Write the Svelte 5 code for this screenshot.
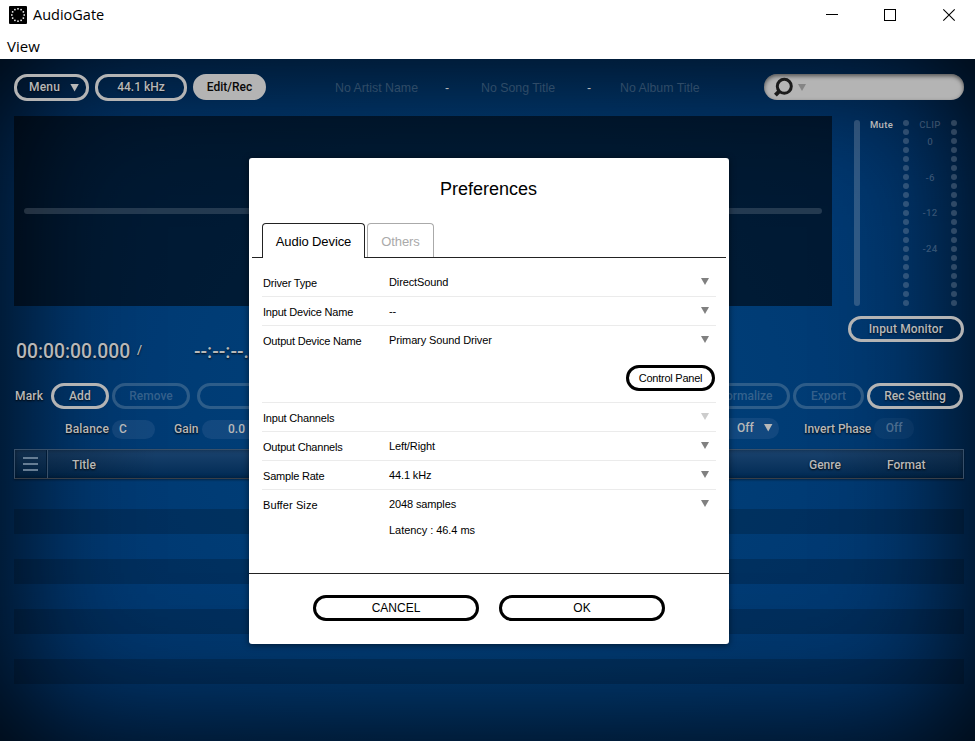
<script lang="ts">
	type Setting = {
		label: string;
		value: string;
		disabled?: boolean;
		panel?: boolean;
		note?: string;
	};

	const settings: Setting[] = [
		{ label: 'Driver Type', value: 'DirectSound' },
		{ label: 'Input Device Name', value: '--' },
		{ label: 'Output Device Name', value: 'Primary Sound Driver', panel: true },
		{ label: 'Input Channels', value: '', disabled: true },
		{ label: 'Output Channels', value: 'Left/Right' },
		{ label: 'Sample Rate', value: '44.1 kHz' },
		{ label: 'Buffer Size', value: '2048 samples', note: 'Latency : 46.4 ms' }
	];

	const dots = Array.from({ length: 21 });
	const rows = Array.from({ length: 9 });
	const ring = Array.from({ length: 12 }, (_, i) => {
		const a = (i * Math.PI) / 6;
		return { x: 9 + 6.2 * Math.cos(a), y: 9 + 6.2 * Math.sin(a) };
	});

	let tab = $state('Audio Device');
</script>

<div class="window">
	<header class="titlebar">
		<svg class="logo" width="18" height="18" viewBox="0 0 18 18">
			<rect width="18" height="18" rx="1" fill="#000" />
			{#each ring as p}
				<rect x={p.x - 0.75} y={p.y - 0.75} width="1.5" height="1.5" fill="#fff" />
			{/each}
		</svg>
		<span class="app-name">AudioGate</span>
		<svg class="controls" width="130" height="14" viewBox="0 0 130 14" fill="none" stroke="#000">
			<path d="M0 6.5h12" />
			<rect x="58.5" y="1.5" width="11" height="11" />
			<path d="M117.3 1.3l11.4 11.4M128.7 1.3l-11.4 11.4" stroke-width="1.1" />
		</svg>
	</header>
	<nav class="menubar">View</nav>

	<main class="stage">
		<div class="toolbar">
			<button class="pill menu">Menu <i class="tri"></i></button>
			<button class="pill rate">44.1 kHz</button>
			<button class="pill filled">Edit/Rec</button>
			<div class="song">
				<span class="artist">No Artist Name</span><b>-</b>
				<span class="name">No Song Title</span><b>-</b>
				<span class="album">No Album Title</span>
			</div>
			<div class="search">
				<svg width="20" height="20" viewBox="0 0 20 20" fill="none" stroke="#1b1b1b">
					<circle cx="11.3" cy="9.3" r="7" stroke-width="3" />
					<path d="M6.4 14.2L2.4 18.2" stroke-width="4" />
				</svg>
				<i class="tri"></i>
			</div>
		</div>

		<div class="upper">
			<div class="wave"><div class="line"></div></div>
			<div class="monitor">
				<div class="meters">
					<div class="slider"></div>
					<span class="mute">Mute</span>
					<div class="dots">{#each dots as _}<i></i>{/each}</div>
					<div class="scale">
						<span>CLIP</span><span>0</span><span>-6</span><span>-12</span><span>-24</span>
					</div>
					<div class="dots">{#each dots as _}<i></i>{/each}</div>
				</div>
				<button class="pill input-monitor">Input Monitor</button>
			</div>
		</div>

		<div class="time">
			<span class="now">00:00:00.000</span><span class="slash">/</span><span class="total">--:--:--.---</span>
		</div>

		<div class="marks">
			<span class="mark">Mark</span>
			<button class="pill add">Add</button>
			<button class="pill off remove">Remove</button>
			<button class="pill off blank" aria-label="Mark list"></button>
			<button class="pill off normalize">Normalize</button>
			<button class="pill off export">Export</button>
			<button class="pill rec">Rec Setting</button>
		</div>

		<div class="params">
			<span class="balance">Balance</span><span class="field c">C</span>
			<span class="gain">Gain</span><span class="field g">0.0</span>
			<span class="field fade">Off <i class="tri"></i></span>
			<span class="invert">Invert Phase</span><span class="field dim">Off</span>
		</div>

		<div class="thead">
			<div class="burger"><i></i><i></i><i></i></div>
			<span class="title">Title</span>
			<span class="genre">Genre</span>
			<span class="format">Format</span>
		</div>
		<div class="tbody">
			{#each rows as _}<div class="trow"></div>{/each}
		</div>
		<div class="vignette"></div>
	</main>

	<section class="dialog">
		<h1>Preferences</h1>
		<div class="tabs">
			{#each ['Audio Device', 'Others'] as t}
				<button class="tab" class:active={tab === t} onclick={() => (tab = t)}>{t}</button>
			{/each}
		</div>
		<div class="settings">
			{#each settings as s}
				<div class="setting" class:disabled={s.disabled} class:tall={s.panel}>
					<div class="main">
						<span class="label">{s.label}</span>
						<span class="value">{s.value}</span>
						<i class="tri"></i>
					</div>
					{#if s.panel}<button class="outline panel">Control Panel</button>{/if}
					{#if s.note}<p class="note">{s.note}</p>{/if}
				</div>
			{/each}
		</div>
		<footer>
			<button class="outline">CANCEL</button>
			<button class="outline">OK</button>
		</footer>
	</section>
</div>

<style>
	:global(body) {
		overflow: hidden;
	}
	.window,
	.window :global(*) {
		box-sizing: border-box;
	}
	.window {
		position: relative;
		width: 975px;
		height: 741px;
		background: #fff;
		overflow: hidden;
	}
	button {
		font: inherit;
		letter-spacing: inherit;
		padding: 0;
		margin: 0;
		white-space: nowrap;
	}
	.titlebar {
		display: flex;
		align-items: center;
		height: 29px;
		padding: 0 19px 0 9px;
		font-family: 'Open Sans', sans-serif;
		font-size: 14.5px;
		color: #000;
	}
	.app-name {
		margin-left: 6px;
	}
	.controls {
		margin-left: auto;
	}
	.menubar {
		height: 30px;
		padding: 6px 0 0 7px;
		font: 15px/22px 'Open Sans', sans-serif;
		color: #000;
	}
	.stage {
		position: relative;
		height: 682px;
		padding: 15px 11px 0 14px;
		background: radial-gradient(ellipse 60% 70% at 50% 50%, #00427c 0%, #003c75 50%, #00356e 100%);
		font-family: Roboto, sans-serif;
		font-size: 12px;
		font-weight: 500;
		color: #b8b8b8;
	}
	.vignette {
		position: absolute;
		inset: 0;
		box-shadow: inset 0 0 140px #000;
		pointer-events: none;
		z-index: 0;
	}
	.stage > :not(.vignette) {
		position: relative;
		z-index: 1;
	}
	.tri {
		display: inline-block;
		width: 9px;
		height: 8px;
		background: currentColor;
		clip-path: polygon(0 0, 100% 0, 50% 100%);
	}
	.pill {
		height: 26px;
		border: 3px solid #b4b4b4;
		border-radius: 13px;
		background: none;
		color: #b8b8b8;
		text-shadow: 0 1px 2px rgba(0, 0, 0, 0.7);
	}
	.pill.off {
		border-color: rgba(180, 190, 200, 0.25);
		color: rgba(180, 190, 200, 0.3);
		text-shadow: none;
	}
	.toolbar {
		display: flex;
		height: 42px;
	}
	.toolbar .pill {
		height: 27px;
		margin-right: 6px;
	}
	.toolbar .menu {
		display: flex;
		align-items: center;
		width: 75px;
		padding: 0 0 1px 12px;
		letter-spacing: 0.2px;
	}
	.menu .tri {
		margin: 1px 0 0 10px;
	}
	.toolbar .rate {
		width: 92px;
		padding-bottom: 1px;
	}
	.toolbar .filled {
		width: 73px;
		height: 26px;
		background: #b4b4b4;
		color: #080808;
		text-shadow: none;
	}
	.song {
		display: flex;
		height: 27px;
		margin-left: 63px;
		font: 12.35px/28px 'Liberation Sans', sans-serif;
		color: #2f4b67;
		white-space: nowrap;
	}
	.song b {
		width: 5px;
		font-weight: normal;
		color: #b8b8b8;
	}
	.artist {
		width: 110px;
	}
	.name {
		width: 106px;
		margin-left: 31px;
	}
	.album {
		margin-left: 28px;
	}
	.search {
		display: flex;
		align-items: center;
		width: 200px;
		height: 26px;
		margin-left: auto;
		padding-left: 9px;
		border-radius: 13px;
		background: #b4b4b4;
		box-shadow: inset 0 2px 4px rgba(0, 0, 0, 0.55);
	}
	.search .tri {
		width: 8px;
		height: 7px;
		margin: 1px 0 0 5px;
		color: #858585;
	}
	.upper {
		display: flex;
		justify-content: space-between;
		height: 226px;
	}
	.wave {
		width: 818px;
		height: 190px;
		padding: 92px 10px 0;
		background: rgba(0, 0, 0, 0.55);
	}
	.line {
		height: 6px;
		border-radius: 3px;
		background: rgba(180, 190, 200, 0.2);
	}
	.monitor {
		width: 116px;
	}
	.meters {
		display: flex;
		height: 200px;
		padding: 4px 0 0 6px;
		font-size: 10px;
	}
	.slider {
		width: 6px;
		height: 186px;
		border-radius: 3px;
		background: rgba(180, 190, 200, 0.26);
	}
	.mute {
		width: 33px;
		margin-left: 10px;
		line-height: 10px;
		font-size: 9.5px;
		letter-spacing: 0.3px;
	}
	.dots {
		display: flex;
		flex-direction: column;
		gap: 3px;
		width: 6px;
	}
	.dots i {
		flex: none;
		width: 6px;
		height: 6px;
		border-radius: 50%;
		background: rgba(180, 190, 200, 0.26);
	}
	.scale {
		display: flex;
		flex-direction: column;
		width: 42px;
		line-height: 10px;
		font-size: 9.7px;
		letter-spacing: 0.2px;
		text-align: center;
		color: rgba(180, 190, 200, 0.3);
	}
	.scale span + span {
		margin-top: 25.6px;
	}
	.scale span:nth-child(2) {
		margin-top: 7px;
	}
	.input-monitor {
		width: 116px;
		letter-spacing: 0.15px;
	}
	.time {
		display: flex;
		height: 41px;
		padding-left: 2px;
		line-height: 19px;
		font-size: 19.3px;
		text-shadow: 0 1px 2px rgba(0, 0, 0, 0.8);
	}
	.now {
		width: 121px;
	}
	.slash {
		width: 57px;
		font-size: 13px;
		line-height: 15px;
	}
	.marks {
		display: flex;
		align-items: center;
		height: 26px;
	}
	.mark {
		width: 37px;
		padding-left: 1px;
		letter-spacing: 0.2px;
		text-shadow: 0 1px 2px #000;
	}
	.add {
		width: 58px;
		letter-spacing: 0.2px;
	}
	.remove {
		width: 78px;
		margin-left: 3px;
	}
	.blank {
		width: 90px;
		margin-left: 7px;
	}
	.normalize {
		width: 90px;
		margin-left: auto;
	}
	.export {
		width: 71px;
		margin: 0 3px;
	}
	.rec {
		width: 96px;
		margin-right: 1px;
	}
	.params {
		display: flex;
		align-items: center;
		height: 40px;
		padding-left: 51px;
		text-shadow: 0 1px 2px #000;
	}
	.field {
		height: 19px;
		border-radius: 10px;
		background: rgba(180, 190, 220, 0.1);
		line-height: 19px;
		text-shadow: none;
	}
	.balance {
		width: 47px;
		letter-spacing: 0.15px;
	}
	.field.c {
		width: 43px;
		padding-left: 7px;
	}
	.gain {
		width: 28px;
		margin-left: 19px;
	}
	.field.g {
		width: 60px;
		padding-left: 26px;
	}
	.field.fade {
		width: 60px;
		height: 21px;
		margin: -2px 25px 0 auto;
		padding-left: 18px;
		line-height: 21px;
	}
	.fade .tri {
		margin-left: 7px;
	}
	.invert {
		width: 70px;
		white-space: nowrap;
	}
	.field.dim {
		width: 40px;
		height: 21px;
		margin: -2px 50px 0 0;
		line-height: 21px;
		text-align: center;
		background: rgba(180, 190, 220, 0.05);
		color: rgba(180, 190, 200, 0.4);
	}
	.thead {
		display: flex;
		align-items: center;
		width: 950px;
		height: 30px;
		border: 1px solid #38506a;
		border-bottom-color: #383f48;
		background: linear-gradient(to right, rgba(0, 0, 0, 0.3), transparent 15%, transparent 85%, rgba(0, 0, 0, 0.3)),
			linear-gradient(#1b436e, #002a54);
		box-shadow: inset 0 0 4px rgba(0, 0, 0, 0.4), 0 1px 2px rgba(0, 0, 0, 0.4);
		text-shadow: 0 1px 2px #000;
	}
	.thead span {
		padding-top: 1px;
	}
	.burger {
		display: flex;
		flex-direction: column;
		justify-content: center;
		gap: 4px;
		width: 33px;
		height: 28px;
		padding-left: 8px;
		border-right: 1px solid #38506a;
		box-shadow: inset -1px 0 #001a35;
	}
	.burger i {
		width: 15px;
		height: 2px;
		background: #667d94;
	}
	.thead .title {
		width: 737px;
		padding-left: 24px;
	}
	.genre {
		width: 78px;
		margin-left: 24px;
	}
	.tbody {
		height: 225px;
		width: 950px;
		margin-top: 5px;
	}
	.trow {
		height: 25px;
	}
	.trow:nth-child(even) {
		background: rgba(0, 0, 0, 0.18);
	}

	.dialog {
		position: absolute;
		left: 249px;
		top: 158px;
		z-index: 2;
		width: 480px;
		height: 486px;
		border-radius: 3px;
		background: #fff;
		box-shadow: 0 1px 6px rgba(0, 0, 0, 0.55);
		font: 11px/14px 'Liberation Sans', sans-serif;
		color: #000;
	}
	h1 {
		margin: 0;
		padding: 20px 1px 0 0;
		height: 65px;
		font-size: 18px;
		line-height: 22px;
		font-weight: normal;
		text-align: center;
	}
	.tabs {
		display: flex;
		gap: 2px;
		height: 35px;
		margin: 0 3px;
		padding-left: 10px;
		border-bottom: 1px solid #222;
	}
	.tab {
		width: 67px;
		height: 34px;
		padding-top: 2px;
		border: 1px solid #aaa;
		border-bottom: 0;
		border-radius: 4px 4px 0 0;
		background: #fff;
		font-size: 13px;
		letter-spacing: -0.1px;
		color: #aaa;
	}
	.tab.active {
		width: 103px;
		height: 35px;
		border-color: #222;
		color: #000;
	}
	.settings {
		height: 315px;
		padding: 10px 13px 0;
	}
	.setting {
		height: 29px;
		border-bottom: 1px solid #ebebeb;
	}
	.setting.tall {
		height: 77px;
	}
	.setting:last-child {
		border: 0;
	}
	.main {
		display: flex;
		height: 28px;
		padding: 8px 7px 0 1px;
	}
	.label {
		width: 126px;
		letter-spacing: -0.2px;
	}
	.setting:last-child .label {
		letter-spacing: 0.1px;
	}
	.value {
		margin-top: -1px;
		letter-spacing: -0.12px;
	}
	.main .tri {
		margin: 2px 0 0 auto;
		width: 8px;
		height: 7px;
		color: #808080;
	}
	.disabled .main .tri {
		color: #ccc;
	}
	.outline {
		width: 166px;
		height: 26px;
		border: 3px solid #000;
		border-radius: 13px;
		background: #fff;
		color: #000;
	}
	.outline.panel {
		display: block;
		width: 89px;
		margin: 11px 1px 0 auto;
		letter-spacing: -0.25px;
	}
	.note {
		margin: 5px 0 0 127px;
		letter-spacing: -0.05px;
	}
	footer {
		display: flex;
		justify-content: center;
		gap: 20px;
		padding-top: 21px;
		border-top: 1px solid #222;
		font-size: 12px;
	}
</style>
